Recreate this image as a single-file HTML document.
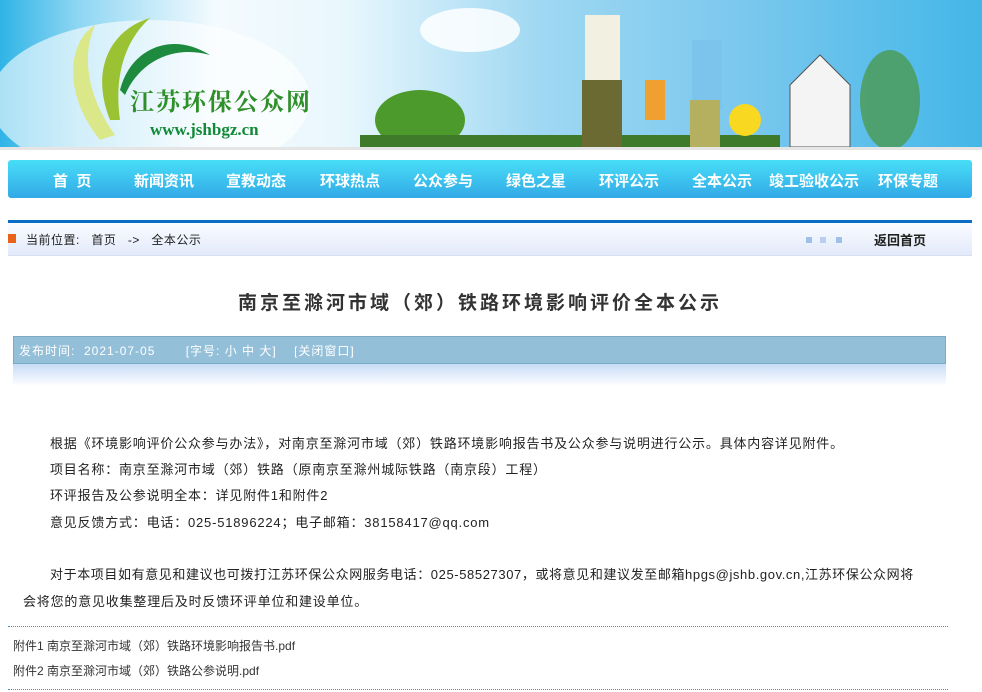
<!DOCTYPE html>
<html><head><meta charset="utf-8"><style>
*{margin:0;padding:0;box-sizing:border-box}
body{width:982px;height:692px;overflow:hidden;background:#fff;font-family:"Liberation Sans","Noto Sans CJK SC",sans-serif;font-size:13px;color:#222;position:relative}
.abs{position:absolute}
#hd{left:0;top:0;width:982px;height:147px;background:linear-gradient(90deg,#2fb4e6 0%,#8fd6f3 8%,#f4fbfe 22%,#e9f7fd 35%,#9fd8f2 55%,#7cc8ee 75%,#43b7e8 100%);overflow:hidden}
#strip{left:0;top:147px;width:982px;height:3px;background:#e5e5e5}
#nav{left:8px;top:160px;width:964px;height:38px;border-radius:3px;background:linear-gradient(#48def7,#32a9e6)}
#nav span{position:absolute;top:10px;color:#fff;font-weight:bold;font-size:15px;white-space:nowrap}
#bl{left:8px;top:220px;width:964px;height:3px;background:#0a6ec4}
#bc{left:8px;top:223px;width:964px;height:33px;background:linear-gradient(#fafcff,#e2e9fa);border-bottom:1px solid #d6dff0}
#ttl{left:0;width:960px;top:288px;text-align:center;font-size:19px;font-weight:bold;color:#333;letter-spacing:3px}
#info{left:13px;top:336px;width:933px;height:28px;background:#93bfd9;border:1px solid #7aaac4;color:#fff;font-size:12px;padding:5px 0 0 5px;white-space:pre;letter-spacing:1px}
#fade{left:13px;top:364px;width:933px;height:22px;background:linear-gradient(#c7dcf7,#fff)}
.p{left:50px;white-space:nowrap;font-size:13px;letter-spacing:.8px}
.dot{left:8px;width:940px;height:0;border-top:1px dotted #3a8dd0}
.att{left:13px;font-size:12px;color:#333;white-space:nowrap}
</style></head><body>
<div id="hd" class="abs">
<svg width="982" height="147" style="position:absolute;left:0;top:0">
<ellipse cx="470" cy="30" rx="50" ry="22" fill="#fff" opacity=".85"/>
<ellipse cx="150" cy="100" rx="160" ry="80" fill="#fff" opacity=".6"/>
<path d="M100 140 C60 90 70 40 95 25 C80 60 90 100 115 135Z" fill="#dbe88a"/>
<path d="M110 120 C90 70 110 30 150 18 C120 45 115 85 120 120Z" fill="#9bc232"/>
<path d="M120 90 C130 50 170 30 210 55 C175 45 140 60 125 95Z" fill="#1d8a3e"/>
<text x="130" y="110" font-family="Noto Serif CJK SC,serif" font-size="24" font-weight="bold" fill="#2f8f2b" letter-spacing="2">江苏环保公众网</text>
<text x="150" y="135" font-family="Liberation Serif,serif" font-size="17" font-weight="bold" fill="#118a38">www.jshbgz.cn</text>
<ellipse cx="420" cy="120" rx="45" ry="30" fill="#4c9a2c"/>
<rect x="360" y="135" width="420" height="12" fill="#3f7a2a"/>
<rect x="585" y="15" width="35" height="70" fill="#f2f0e0"/>
<rect x="582" y="80" width="40" height="67" fill="#6b6a32"/>
<rect x="645" y="80" width="20" height="40" fill="#f0a030"/>
<rect x="692" y="40" width="30" height="70" fill="#7cc4ec"/>
<rect x="690" y="100" width="30" height="47" fill="#b5b060"/>
<circle cx="745" cy="120" r="16" fill="#f8d820"/>
<path d="M790 147 V85 L820 55 L850 85 V147Z" fill="#f4f4f4" stroke="#555"/>
<ellipse cx="890" cy="100" rx="30" ry="50" fill="#4b9a50" opacity=".8"/>
</svg>
</div>
<div id="strip" class="abs"></div>
<div id="nav" class="abs">
<span style="left:45px">首&nbsp;&nbsp;页</span>
<span style="left:126px">新闻资讯</span>
<span style="left:218px">宣教动态</span>
<span style="left:312px">环球热点</span>
<span style="left:405px">公众参与</span>
<span style="left:498px">绿色之星</span>
<span style="left:591px">环评公示</span>
<span style="left:684px">全本公示</span>
<span style="left:761px">竣工验收公示</span>
<span style="left:870px">环保专题</span>
</div>
<div id="bl" class="abs"></div>
<div id="bc" class="abs">
<div class="abs" style="left:0;top:11px;width:8px;height:9px;background:#e8621a"></div>
<div class="abs" style="left:18px;top:8px;font-size:12px;white-space:pre;letter-spacing:.5px">当前位置:   首页   ->   全本公示</div>
<div class="abs" style="left:798px;top:14px;width:6px;height:6px;background:#9fc0e8"></div>
<div class="abs" style="left:812px;top:14px;width:6px;height:6px;background:#b8d0ee"></div>
<div class="abs" style="left:828px;top:14px;width:6px;height:6px;background:#9fc0e8"></div>
<div class="abs" style="left:866px;top:7px;font-size:13px;font-weight:bold;color:#222">返回首页</div>
</div>
<div id="ttl" class="abs">南京至滁河市域（郊）铁路环境影响评价全本公示</div>
<div id="info" class="abs">发布时间:  2021-07-05       [字号: 小 中 大]    [关闭窗口]</div>
<div id="fade" class="abs"></div>
<div class="abs p" style="top:433px">根据《环境影响评价公众参与办法》，对南京至滁河市域（郊）铁路环境影响报告书及公众参与说明进行公示。具体内容详见附件。</div>
<div class="abs p" style="top:459px">项目名称：南京至滁河市域（郊）铁路（原南京至滁州城际铁路（南京段）工程）</div>
<div class="abs p" style="top:485px">环评报告及公参说明全本：详见附件1和附件2</div>
<div class="abs p" style="top:512px">意见反馈方式：电话：025-51896224；电子邮箱：38158417@qq.com</div>
<div class="abs p" style="top:564px;letter-spacing:.6px">对于本项目如有意见和建议也可拨打江苏环保公众网服务电话：025-58527307，或将意见和建议发至邮箱hpgs@jshb.gov.cn,江苏环保公众网将</div>
<div class="abs p" style="top:591px;left:23px">会将您的意见收集整理后及时反馈环评单位和建设单位。</div>
<div class="abs dot" style="top:626px"></div>
<div class="abs att" style="top:637px">附件1 南京至滁河市域（郊）铁路环境影响报告书.pdf</div>
<div class="abs att" style="top:662px">附件2 南京至滁河市域（郊）铁路公参说明.pdf</div>
<div class="abs dot" style="top:689px"></div>
</body></html>
